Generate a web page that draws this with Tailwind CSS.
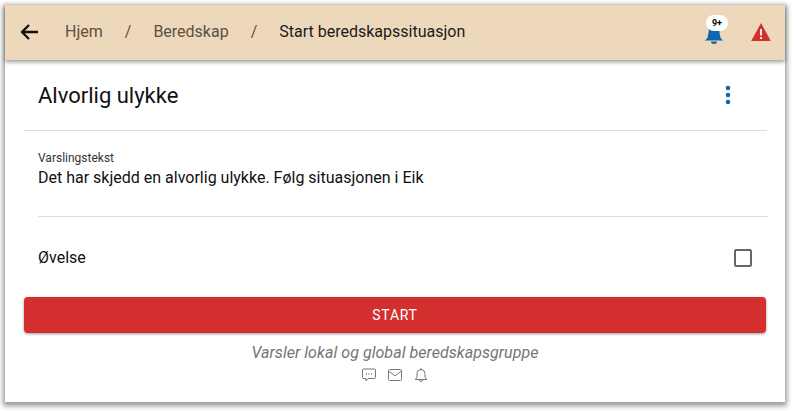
<!DOCTYPE html>
<html lang="no"><head><meta charset="utf-8"><script src="https://cdn.jsdelivr.net/npm/@tailwindcss/browser@4"></script></head>
<body class="bg-white w-[794px] h-[411px] overflow-hidden font-['Roboto',sans-serif]">
<div class="mt-[5px] ml-[5px] w-[780px] h-[397px] bg-white flex flex-col shadow-[0_2px_5px_2px_rgba(0,0,0,0.4)]">
  <header class="h-[55px] shrink-0 bg-[#edd8bc] flex items-center pl-[15px] pr-[14px] shadow-[0_2px_4px_rgba(0,0,0,0.4)] z-10">
    <svg class="w-[18px] h-[18px] shrink-0 -mt-[2px]" viewBox="0 0 18 18" fill="none" stroke="#111" stroke-width="2.300"><path d="M18 9H2M9 2L2 9l7 7"/></svg>
    <nav class="flex items-center text-[16px] ml-[27px] text-[#5b5145] -mt-[2px]">
      <span>Hjem</span><span class="ml-[22px]">/</span><span class="ml-[22px]">Beredskap</span><span class="ml-[22px]">/</span><span class="ml-[22px] text-[#1c1a18]">Start beredskapssituasjon</span>
    </nav>
    <div class="ml-auto flex items-center">
      <div class="relative w-[20px] h-[20px] mt-[2px] -mr-[1px]">
        <svg class="w-[20px] h-[20px]" viewBox="0 0 20 20" fill="#0f68ae"><path d="M.5 16.500c2-.8 3-2 3.500-5L5 5a5 5 0 0 1 10 0l1 6.500c.5 3 1.500 4.200 3.500 5z"/><path d="M7 17.500h6a3 2.500 0 0 1-6 0z"/></svg>
        <span class="absolute left-[2px] -top-[9px] w-[22px] h-[16px] rounded-full bg-white text-[9px] font-bold leading-[16px] text-center text-black">9+</span>
      </div>
      <svg class="w-[20px] h-[20px] ml-[28px] -mt-[1px]" viewBox="0 0 20 20"><path fill="#d32f2f" d="M10 1 L19.800 19H.2z"/><rect x="9.100" y="7" width="1.800" height="6.500" fill="#fff"/><rect x="9.100" y="15" width="1.800" height="2" fill="#fff"/></svg>
    </div>
  </header>
  <main class="flex-1 flex flex-col">
    <div class="ml-[19px] mr-[18px] h-[71px] shrink-0 border-b border-[#dcdcdc] flex items-center justify-between pl-[14px] pr-[36px]">
      <h1 class="text-[22px] text-[#111] font-normal">Alvorlig ulykke</h1>
      <svg class="w-[6px] h-[20px]" viewBox="0 0 6 20" fill="#0f68ae"><circle cx="3" cy="3" r="2.300"/><circle cx="3" cy="10" r="2.300"/><circle cx="3" cy="17" r="2.300"/></svg>
    </div>
    <div class="mx-[33px] w-[730px] h-[86px] shrink-0 border-b border-[#dcdcdc] pt-[20px]">
      <div class="text-[12px] leading-[14px] text-[#333]">Varslingstekst</div>
      <div class="text-[16px] leading-[24px] mt-[1px] text-[#111]">Det har skjedd en alvorlig ulykke. Følg situasjonen i Eik</div>
    </div>
    <div class="ml-[33px] mr-[33px] h-[80px] shrink-0 flex items-center justify-between pt-[1px]">
      <span class="text-[16px] text-[#111]">Øvelse</span>
      <span class="w-[18px] h-[18px] rounded-[2px] border-2 border-[#666]"></span>
    </div>
    <button class="mx-[19px] h-[36px] shrink-0 rounded-[4px] bg-[#d32f2f] text-white text-[14px] font-normal tracking-[0.75px] shadow-[0_1px_3px_rgba(0,0,0,0.4)]">START</button>
    <p class="mt-[10px] text-center text-[16px] leading-[20px] italic text-[#757575] tracking-[0.05px]">Varsler lokal og global beredskapsgruppe</p>
    <div class="mt-[5px] flex justify-center gap-[12px]">
      <svg class="w-[14px] h-[14px]" viewBox="0 0 14 14" fill="none" stroke="#777"><path d="M1.500 1h11a1 1 0 0 1 1 1v7.500a1 1 0 0 1-1 1H6l-2 2.500v-2.500H1.500a1 1 0 0 1-1-1V2a1 1 0 0 1 1-1z"/><path d="M4 6h1M6.500 6h1M9 6h1" stroke-width="1.500"/></svg>
      <svg class="w-[14px] h-[14px]" viewBox="0 0 14 14" fill="none" stroke="#777"><rect x=".5" y="1.500" width="13" height="11" rx="1"/><path d="M.5 3l6.500 5 6.500-5"/></svg>
      <svg class="w-[14px] h-[14px]" viewBox="0 0 14 14" fill="none" stroke="#777"><path d="M1.200 11.500c1-.8 1.800-1.500 1.800-3.500V5.500a4 4 0 0 1 8 0V8c0 2 .8 2.700 1.800 3.500z"/><path d="M5.500 12a1.500 1.500 0 0 0 3 0M7 0v1.500"/></svg>
    </div>
  </main>
</div>
</body></html>
